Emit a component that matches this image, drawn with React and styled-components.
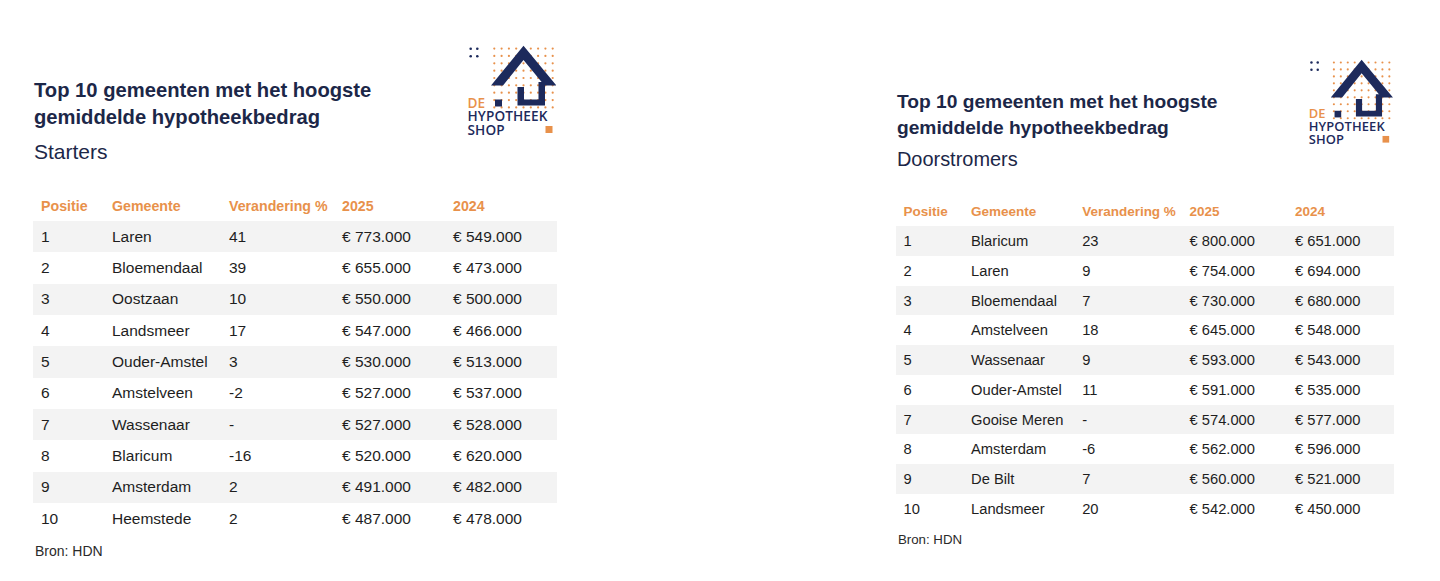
import React from 'react';
import styled, { createGlobalStyle, ThemeProvider } from 'styled-components';

const u = (n) => ({ theme }) => `${(n * theme.s).toFixed(2)}px`;

const NAVY = '#1c2748';
const LOGO_NAVY = '#1d2a5c';
const ORANGE = '#e8914b';

const Global = createGlobalStyle`
  html, body { margin: 0; padding: 0; background: #ffffff; }
  body { font-family: "Liberation Sans", Arial, Helvetica, sans-serif; }
`;

const Page = styled.div`
  width: 1440px;
  height: 581px;
  box-sizing: border-box;
  overflow: hidden;
  display: flex;
  align-items: flex-start;
  gap: 339px;
  padding-left: 33px;
`;

const Panel = styled.section`
  width: ${u(524)};
  padding-top: ${(p) => p.$top}px;
  display: flex;
  flex-direction: column;
`;

const Head = styled.header`
  height: ${u(146)};
  display: flex;
  justify-content: space-between;
  align-items: flex-start;
`;

const TitleBlock = styled.div`
  padding-top: ${u(31.5)};
  padding-left: ${u(1)};
`;

const Title = styled.h2`
  margin: 0;
  font-size: ${u(20.2)};
  line-height: ${u(27)};
  font-weight: 700;
  color: ${NAVY};
`;

const Subtitle = styled.div`
  margin-top: ${u(7)};
  font-size: ${u(21)};
  line-height: ${u(27)};
  color: ${NAVY};
`;

const LogoBox = styled.div`
  position: relative;
  width: ${u(90)};
  height: ${u(90)};
  margin-right: ${u(1)};
  flex: none;
  svg { position: absolute; inset: 0; display: block; width: 100%; height: 100%; }
`;

const LogoText = styled.div`
  position: absolute;
  left: ${u(1.5)};
  top: ${u(51)};
  font-family: "Open Sans", "Noto Sans", sans-serif;
  font-weight: 600;
  font-size: ${u(13.6)};
  line-height: ${u(13.3)};
  letter-spacing: ${u(0.1)};
  color: ${LOGO_NAVY};
  white-space: nowrap;
`;

const LogoLine = styled.div`
  color: ${(p) => (p.$accent ? ORANGE : LOGO_NAVY)};
`;

const Table = styled.div`
  display: flex;
  flex-direction: column;
`;

const Row = styled.div`
  display: grid;
  grid-template-columns: ${u(71)} ${u(117)} ${u(113)} ${u(111)} ${u(112)};
  height: ${(p) => (p.$head ? u(30)(p) : u(31.33)(p))};
  align-items: center;
  background: ${(p) => (p.$striped ? '#f3f3f3' : 'transparent')};
`;

const Cell = styled.div`
  padding-left: ${u(8)};
  font-size: ${(p) => (p.$head ? u(14.2)(p) : u(15.5)(p))};
  font-weight: ${(p) => (p.$head ? 700 : 400)};
  color: ${(p) => (p.$head ? ORANGE : '#1e1e1e')};
  white-space: nowrap;
`;

const Source = styled.div`
  margin-top: ${u(8.5)};
  padding-left: ${u(2)};
  font-size: ${u(14)};
  line-height: ${u(17)};
  color: #2a2a2a;
`;

function Logo() {
  const dots = [];
  for (let j = 0; j < 9; j++) {
    for (let i = 0; i < 9; i++) {
      dots.push(
        <circle key={`${i}-${j}`} cx={28.3 + 7.3 * i} cy={3.6 + 7.35 * j} r="1.1" fill={ORANGE} />
      );
    }
  }
  return (
    <LogoBox>
      <svg viewBox="0 0 90 90">
        {dots}
        <circle cx="4.7" cy="3.7" r="1.3" fill={LOGO_NAVY} />
        <circle cx="11.3" cy="3.7" r="1.3" fill={LOGO_NAVY} />
        <circle cx="4.7" cy="11.3" r="1.3" fill={LOGO_NAVY} />
        <circle cx="11.3" cy="11.3" r="1.3" fill={LOGO_NAVY} />
        <path d="M25 40.5 L57.5 0.8 L90.5 40.5 L78.5 40.5 L57.5 15 L37 40.5 Z" fill={LOGO_NAVY} />
        <path d="M72.5 37 L79 37 L79 60.5 L51.5 60.5 L51.5 42 L58 42 L58 54.5 L72.5 54.5 Z" fill={LOGO_NAVY} />
        <rect x="29" y="54.5" width="7" height="7" fill={LOGO_NAVY} />
        <rect x="79.5" y="81" width="7" height="7" fill={ORANGE} />
      </svg>
      <LogoText>
        <LogoLine $accent>DE</LogoLine>
        <LogoLine>HYPOTHEEK</LogoLine>
        <LogoLine>SHOP</LogoLine>
      </LogoText>
    </LogoBox>
  );
}

const HEAD = ['Positie', 'Gemeente', 'Verandering %', '2025', '2024'];

const starters = [
  ['1', 'Laren', '41', '€ 773.000', '€ 549.000'],
  ['2', 'Bloemendaal', '39', '€ 655.000', '€ 473.000'],
  ['3', 'Oostzaan', '10', '€ 550.000', '€ 500.000'],
  ['4', 'Landsmeer', '17', '€ 547.000', '€ 466.000'],
  ['5', 'Ouder-Amstel', '3', '€ 530.000', '€ 513.000'],
  ['6', 'Amstelveen', '-2', '€ 527.000', '€ 537.000'],
  ['7', 'Wassenaar', '-', '€ 527.000', '€ 528.000'],
  ['8', 'Blaricum', '-16', '€ 520.000', '€ 620.000'],
  ['9', 'Amsterdam', '2', '€ 491.000', '€ 482.000'],
  ['10', 'Heemstede', '2', '€ 487.000', '€ 478.000'],
];

const doorstromers = [
  ['1', 'Blaricum', '23', '€ 800.000', '€ 651.000'],
  ['2', 'Laren', '9', '€ 754.000', '€ 694.000'],
  ['3', 'Bloemendaal', '7', '€ 730.000', '€ 680.000'],
  ['4', 'Amstelveen', '18', '€ 645.000', '€ 548.000'],
  ['5', 'Wassenaar', '9', '€ 593.000', '€ 543.000'],
  ['6', 'Ouder-Amstel', '11', '€ 591.000', '€ 535.000'],
  ['7', 'Gooise Meren', '-', '€ 574.000', '€ 577.000'],
  ['8', 'Amsterdam', '-6', '€ 562.000', '€ 596.000'],
  ['9', 'De Bilt', '7', '€ 560.000', '€ 521.000'],
  ['10', 'Landsmeer', '20', '€ 542.000', '€ 450.000'],
];

function RankPanel({ scale, top, subtitle, rows }) {
  return (
    <ThemeProvider theme={{ s: scale }}>
      <Panel $top={top}>
        <Head>
          <TitleBlock>
            <Title>
              Top 10 gemeenten met het hoogste
              <br />
              gemiddelde hypotheekbedrag
            </Title>
            <Subtitle>{subtitle}</Subtitle>
          </TitleBlock>
          <Logo />
        </Head>
        <Table>
          <Row $head>
            {HEAD.map((h) => (
              <Cell $head key={h}>{h}</Cell>
            ))}
          </Row>
          {rows.map((r, i) => (
            <Row key={r[0]} $striped={i % 2 === 0}>
              {r.map((c, k) => (
                <Cell key={k}>{c}</Cell>
              ))}
            </Row>
          ))}
        </Table>
        <Source>Bron: HDN</Source>
      </Panel>
    </ThemeProvider>
  );
}

export default function App() {
  return (
    <>
      <Global />
      <Page>
        <RankPanel scale={1} top={45} subtitle="Starters" rows={starters} />
        <RankPanel scale={0.95} top={59} subtitle="Doorstromers" rows={doorstromers} />
      </Page>
    </>
  );
}
